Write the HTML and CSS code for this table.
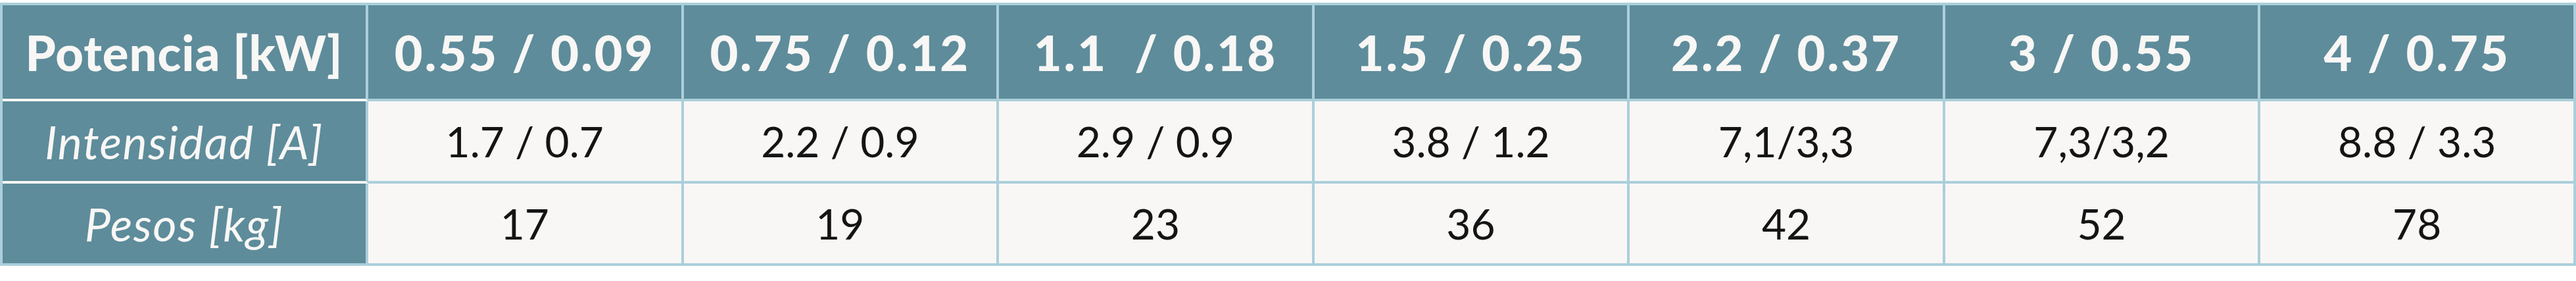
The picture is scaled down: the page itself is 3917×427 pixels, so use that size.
FILE: index.html
```html
<!DOCTYPE html>
<html lang="es">
  <head>
    <meta charset="UTF-8" />
    <meta name="viewport" content="width=device-width, initial-scale=1.0" />
    <title>Potencia / Intensidad / Pesos</title>
    <link rel="stylesheet" href="styles.css">
  </head>
  <body>
    <table class="specs">
      <colgroup>
        <col class="col-label" />
        <col span="7" />
      </colgroup>
      <thead>
        <tr>
          <th class="label">Potencia [kW]</th>
          <th>0.55 / 0.09</th>
          <th>0.75 / 0.12</th>
          <th>1.1&nbsp; / 0.18</th>
          <th>1.5 / 0.25</th>
          <th>2.2 / 0.37</th>
          <th>3 / 0.55</th>
          <th class="last">4 / 0.75</th>
        </tr>
      </thead>
      <tbody>
        <tr>
          <th class="label">Intensidad [A]</th>
          <td>1.7 / 0.7</td>
          <td>2.2 / 0.9</td>
          <td>2.9 / 0.9</td>
          <td>3.8 / 1.2</td>
          <td>7,1/3,3</td>
          <td>7,3/3,2</td>
          <td>8.8 / 3.3</td>
        </tr>
        <tr class="bottom">
          <th class="label">Pesos [kg]</th>
          <td>17</td>
          <td>19</td>
          <td>23</td>
          <td>36</td>
          <td>42</td>
          <td>52</td>
          <td>78</td>
        </tr>
      </tbody>
    </table>
  </body>
</html>
```
FILE: styles.css
```css
* {
  margin: 0;
  padding: 0;
}
body {
  background: #fff;
  padding-top: 4px;
  font-family: Lato, "Noto Sans", sans-serif;
}
.specs {
  width: 100%;
  table-layout: fixed;
  border-collapse: separate;
  border-spacing: 0;
  border-top: 4px solid #abcfdb;
  border-left: 4px solid #abcfdb;
}
.specs .col-label {
  width: 556px;
}
.specs th,
.specs td {
  text-align: center;
  vertical-align: middle;
  white-space: nowrap;
  border-right: 4px solid #abcfdb;
  border-bottom: 4px solid #abcfdb;
}
thead th {
  height: 142px;
  background: #5e8c9b;
  color: #f8f7f5;
  font-size: 74px;
  font-weight: 900;
  letter-spacing: 3px;
  border-right-color: #f8f7f5;
}
thead th.last {
  border-right-color: #abcfdb;
}
thead th.label {
  letter-spacing: 1px;
  border-bottom-color: #f8f7f5;
}
tbody th.label {
  height: 121px;
  background: #5e8c9b;
  color: #f8f7f5;
  font-size: 70px;
  font-weight: 400;
  font-style: italic;
  letter-spacing: 1.5px;
  border-bottom-color: #f8f7f5;
}
tbody tr.bottom th.label {
  border-bottom-color: #abcfdb;
}
tbody td {
  height: 121px;
  background: #f8f7f5;
  color: #141414;
  font-size: 64px;
}
```
